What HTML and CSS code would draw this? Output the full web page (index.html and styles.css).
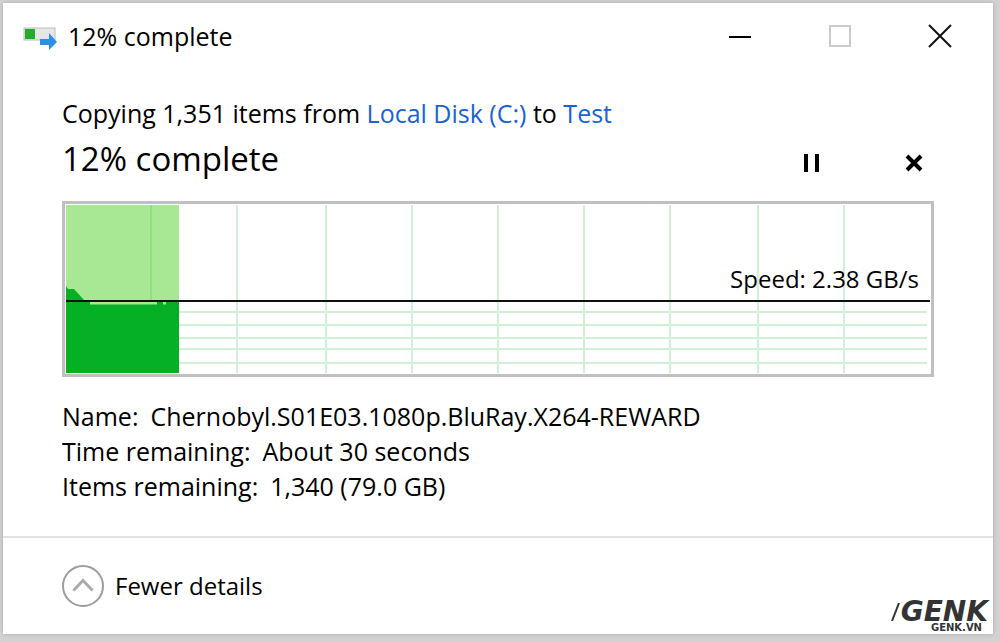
FILE: index.html
```html
<!DOCTYPE html>
<html lang="en">
<head>
    <meta charset="UTF-8">
    <meta name="viewport" content="width=device-width, initial-scale=1.0">
    <title>12% complete</title>
    <link rel="stylesheet" href="styles.css">
</head>
<body>
    <div class="window">
        <header class="title-bar">
            <svg class="app-icon" width="36" height="28" viewBox="0 0 36 28">
                <rect x="1" y="6" width="31" height="12" fill="#e6e6e6" stroke="#b9bcb9"/>
                <rect x="2" y="7" width="10" height="10" fill="#22ac2c"/>
                <path d="M17 17h9v-6l8 9-8 8v-5h-9z" fill="#2b8fe3"/>
            </svg>
            <span class="title">12% complete</span>
            <div class="window-controls">
                <button type="button" aria-label="Minimize">
                    <svg width="24" height="24" viewBox="0 0 24 24"><path d="M1 13h22" stroke="#000" stroke-width="2"/></svg>
                </button>
                <button type="button" aria-label="Maximize" disabled>
                    <svg width="24" height="24" viewBox="0 0 24 24"><rect x="2" y="2" width="20" height="20" fill="none" stroke="#cbcbcb" stroke-width="2"/></svg>
                </button>
                <button type="button" aria-label="Close">
                    <svg width="24" height="24" viewBox="0 0 24 24"><path d="M1 1l22 22M23 1L1 23" stroke="#111" stroke-width="2"/></svg>
                </button>
            </div>
        </header>

        <main class="content">
            <p class="summary">Copying 1,351 items from <a href="#">Local Disk (C:)</a> to <a href="#">Test</a></p>
            <div class="status">
                <h1>12% complete</h1>
                <div class="actions">
                    <button type="button" aria-label="Pause">
                        <svg width="20" height="20" viewBox="0 0 20 20"><path d="M4 1v18M15 1v18" stroke="#000" stroke-width="4"/></svg>
                    </button>
                    <button type="button" aria-label="Cancel">
                        <svg width="20" height="20" viewBox="0 0 20 20"><path d="M3 3l14 14M17 3L3 17" stroke="#000" stroke-width="4"/></svg>
                    </button>
                </div>
            </div>

            <div class="chart">
                <svg viewBox="0 0 864 168" preserveAspectRatio="none">
                    <!-- grid -->
                    <path d="M171 0v168M260 0v168M346 0v168M432 0v168M518 0v168M604 0v168M692 0v168M778 0v168" stroke="#d0f0d8" stroke-width="2"/>
                    <path d="M113 107h748M113 120h748M113 133h748M113 144h748M113 158h748" stroke="#d0f0d8" stroke-width="2"/>
                    <!-- progress and speed history -->
                    <rect width="113" height="168" fill="#a8e794"/>
                    <path d="M85 0v96" stroke="#8fe07f" stroke-width="2"/>
                    <path d="M0 81l2 3h6l10 11h95v73H0z" fill="#06b025"/>
                    <path d="M24 98h67M97 98h3" stroke="#a8e794" stroke-width="3"/>
                    <path d="M0 96h864" stroke="#111" stroke-width="2"/>
                </svg>
                <span class="speed">Speed: 2.38 GB/s</span>
            </div>

            <dl class="details">
                <div><dt>Name:</dt><dd>Chernobyl.S01E03.1080p.BluRay.X264-REWARD</dd></div>
                <div><dt>Time remaining:</dt><dd>About 30 seconds</dd></div>
                <div><dt>Items remaining:</dt><dd>1,340 (79.0 GB)</dd></div>
            </dl>
        </main>

        <footer class="footer">
            <button type="button" class="toggle">
                <svg width="42" height="42" viewBox="0 0 42 42" fill="none">
                    <circle cx="21" cy="21" r="20" stroke="#9c9c9c" stroke-width="2"/>
                    <path d="M11.5 25.5l9.500-10 9.500 10" stroke="#ababab" stroke-width="3"/>
                </svg>
                <span>Fewer details</span>
            </button>
        </footer>

        <div class="watermark">
            <div class="brand">
                <svg width="10" height="18" viewBox="0 0 10 18"><path d="M1 18L8 0" stroke="#333" stroke-width="2"/></svg>
                <span>GENK</span>
            </div>
            <div class="domain">GENK.VN</div>
        </div>
    </div>
</body>
</html>
```
FILE: styles.css
```css
* {
    box-sizing: border-box;
}
body {
    margin: 0;
    min-height: 100vh;
    padding: 3px 7px 8px 3px;
    display: flex;
    background-color: #d2d2d2;
    font-family: "Segoe UI", "Open Sans", sans-serif;
    font-size: 25px;
    line-height: 36px;
    color: #000;
}
.window {
    position: relative;
    flex: 1;
    display: flex;
    flex-direction: column;
    background-color: #fff;
    box-shadow: 0 0 4px #aaa;
}
button {
    padding: 0;
    border: none;
    background: none;
    font: inherit;
    color: inherit;
    display: flex;
    align-items: center;
    justify-content: center;
}
.title-bar {
    display: flex;
    align-items: center;
    height: 66px;
    padding: 0 3px 0 20px;
}
.title {
    margin-left: 9px;
}
.window-controls {
    display: flex;
    margin-left: auto;
}
.window-controls button {
    width: 100px;
    height: 66px;
}
.content {
    padding: 26px 59px 0;
}
.summary {
    margin: 0;
}
.summary a {
    color: #1a63d2;
    text-decoration: none;
}
.status {
    display: flex;
    align-items: center;
    justify-content: space-between;
    margin-bottom: 14px;
}
.status h1 {
    margin: 0;
    font-size: 33px;
    font-weight: normal;
    line-height: 56px;
}
.actions {
    display: flex;
    gap: 62px;
    padding-top: 8px;
}
.actions button {
    width: 40px;
    height: 40px;
}
.chart {
    position: relative;
    height: 176px;
    border: 3px solid #c0c0c0;
    padding: 1px;
    background-color: #fff;
}
.chart svg {
    display: block;
    width: 100%;
    height: 100%;
}
.speed {
    position: absolute;
    right: 12px;
    top: 57px;
    font-size: 24px;
}
.details {
    margin: 22px 0 0;
    line-height: 35px;
}
.details div {
    display: flex;
    gap: 12px;
}
.details dd {
    margin: 0;
}
.footer {
    margin-top: auto;
    height: 98px;
    padding: 0 59px;
    display: flex;
    align-items: center;
    border-top: 2px solid #e2e2e2;
}
.toggle {
    gap: 11px;
    font-size: 24px;
}
.watermark {
    position: absolute;
    right: 5px;
    bottom: 1px;
    color: #333;
    font-family: "DejaVu Sans", sans-serif;
    font-weight: bold;
    text-align: right;
}
.brand {
    display: flex;
    align-items: center;
    justify-content: flex-end;
    font-size: 28px;
    font-style: oblique;
    line-height: 22px;
}
.domain {
    padding-right: 6px;
    font-size: 10px;
    line-height: 10px;
}
```
